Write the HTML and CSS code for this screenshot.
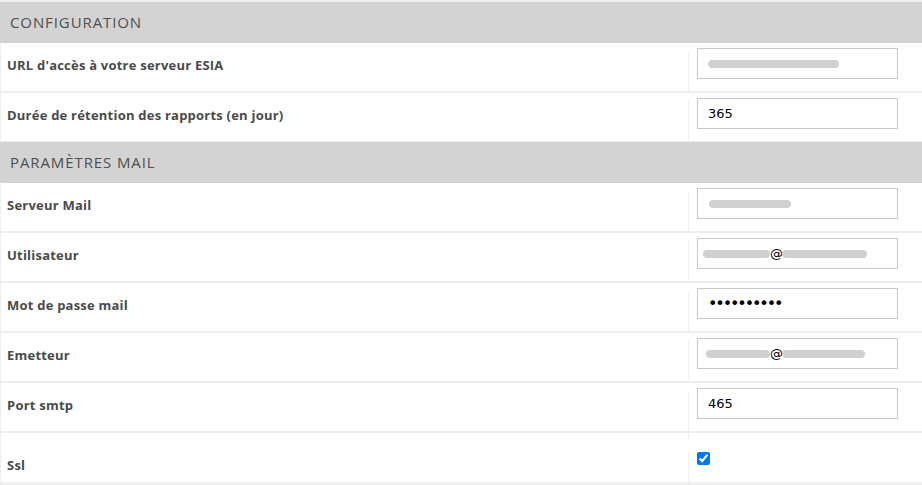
FILE: index.html
```html
<!DOCTYPE html>
<html lang="fr">
<head>
<meta charset="utf-8">
<title>Configuration</title>
<link rel="stylesheet" href="styles.css">
</head>
<body>
<div class="settings">
  <div class="section">CONFIGURATION</div>
  <div class="row">
    <div class="label">URL d'accès à votre serveur ESIA</div>
    <div class="value"><div class="field"><span class="blur b-url"></span></div></div>
  </div>
  <div class="row">
    <div class="label">Durée de rétention des rapports (en jour)</div>
    <div class="value"><input class="field" type="text" value="365"></div>
  </div>
  <div class="section">PARAMÈTRES MAIL</div>
  <div class="row">
    <div class="label">Serveur Mail</div>
    <div class="value"><div class="field"><span class="blur b-srv"></span></div></div>
  </div>
  <div class="row">
    <div class="label">Utilisateur</div>
    <div class="value"><div class="field"><span class="blur b-u1"></span><span class="at">@</span><span class="blur b-u2"></span></div></div>
  </div>
  <div class="row">
    <div class="label">Mot de passe mail</div>
    <div class="value"><input class="field pwd" type="password" value="abcdefghij"></div>
  </div>
  <div class="row">
    <div class="label">Emetteur</div>
    <div class="value"><div class="field"><span class="blur b-e1"></span><span class="at">@</span><span class="blur b-e2"></span></div></div>
  </div>
  <div class="row">
    <div class="label">Port smtp</div>
    <div class="value"><input class="field" type="text" value="465"></div>
  </div>
  <div class="row row-ssl">
    <div class="label">Ssl</div>
    <div class="value value-ssl"><input class="check" type="checkbox" checked></div>
  </div>
</div>
</body>
</html>
```
FILE: styles.css
```css
html, body {
  margin: 0;
  padding: 0;
  background: #ffffff;
}

.settings {
  width: 922px;
  height: 485px;
  background: #eeeeee;
  padding-top: 1px;
  box-sizing: border-box;
  font-family: "Open Sans", "Noto Sans", sans-serif;
}

.section {
  border-top: 1px solid #eeeeee;
  height: 41px;
  background: #d3d3d3;
  color: #4f4f4f;
  font-size: 15px;
  font-weight: 500;
  line-height: 40px;
  padding-left: 10px;
  letter-spacing: 0.9px;
}

.row {
  display: flex;
  height: 48px;
  margin-left: 1px;
  background: #ffffff;
}

.row + .row {
  margin-top: 2px;
}

.row-ssl {
  height: 49px;
}

.label {
  width: 681px;
  padding: 13px 0 0 6px;
  font-size: 13px;
  line-height: 18px;
  font-weight: 700;
  letter-spacing: 0.22px;
  color: #4a4a4a;
}

.row-ssl .label {
  padding-top: 23px;
}

.value {
  flex: 1;
  padding: 5px 0 0 9px;
  background: linear-gradient(#eeeeee, #eeeeee) no-repeat 0 8px / 1px calc(100% - 8px);
}

.value-ssl {
  padding-top: 15px;
  background:
    linear-gradient(#eeeeee, #eeeeee) no-repeat 0 0 / 1px 6px,
    linear-gradient(#eeeeee, #eeeeee) no-repeat 0 19px / 1px calc(100% - 19px);
}

.field {
  display: flex;
  align-items: center;
  box-sizing: border-box;
  width: 201px;
  height: 31px;
  margin: 0;
  border: 1px solid #c8c8c8;
  padding: 0 0 0 10px;
  background: #ffffff;
  font-family: "DejaVu Sans", Verdana, sans-serif;
  font-size: 13px;
  color: #000000;
  outline: none;
}

.pwd {
  font-size: 16px;
  letter-spacing: -2.1px;
}

.blur {
  display: inline-block;
  height: 8px;
  border-radius: 4px;
  background: #d0d0d0;
}

.b-url { width: 131px; margin-left: 0; }
.b-srv { width: 82px; margin-left: 1px; }
.b-u1 { width: 67px; margin-left: -5px; }
.b-u2 { width: 85px; margin-left: -1px; }
.b-e1 { width: 64px; margin-left: -2px; }
.b-e2 { width: 83px; margin-left: -1px; }

.at {
  font-size: 13px;
  line-height: 16px;
}

.check {
  width: 13px;
  height: 13px;
  margin: 0;
}
```
